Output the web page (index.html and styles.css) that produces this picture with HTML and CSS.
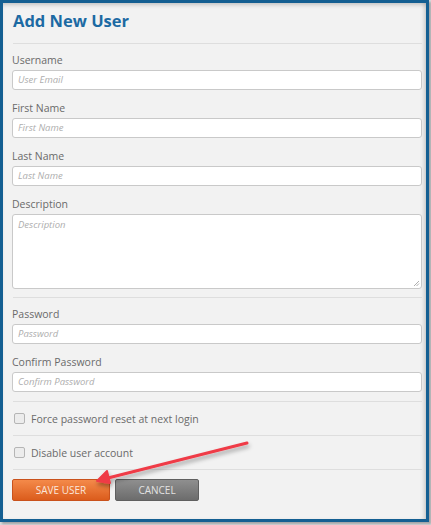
FILE: index.html
```html
<!DOCTYPE html>
<html>
<head>
<meta charset="utf-8">
<link rel="stylesheet" href="styles.css">
</head>
<body>
<div class="frame">
  <div class="panel">
    <h1 class="title">Add New User</h1>
    <div class="rule rule-title"></div>

    <div class="field">
      <label class="label">Username</label>
      <div class="input">User Email</div>
    </div>
    <div class="field">
      <label class="label">First Name</label>
      <div class="input">First Name</div>
    </div>
    <div class="field">
      <label class="label">Last Name</label>
      <div class="input">Last Name</div>
    </div>
    <div class="field field-last">
      <label class="label">Description</label>
      <div class="input textarea">Description
        <svg class="grip" width="7" height="7" viewBox="0 0 7 7"><path d="M6 1 L1 6 M6 3.5 L3.5 6" stroke="#999" stroke-width="0.8"/></svg>
      </div>
    </div>
    <div class="rule rule-section"></div>

    <div class="field">
      <label class="label">Password</label>
      <div class="input">Password</div>
    </div>
    <div class="field field-last">
      <label class="label">Confirm Password</label>
      <div class="input">Confirm Password</div>
    </div>
    <div class="rule rule-before-checks"></div>

    <div class="check-row"><span class="box"></span><span>Force password reset at next login</span></div>
    <div class="rule"></div>
    <div class="check-row"><span class="box"></span><span>Disable user account</span></div>
    <div class="rule"></div>

    <div class="actions">
      <button class="btn btn-save">SAVE USER</button>
      <button class="btn btn-cancel">CANCEL</button>
    </div>
  </div>
  <svg class="arrow" width="431" height="525" viewBox="0 0 431 525">
    <defs>
      <filter id="sh" x="-20%" y="-50%" width="140%" height="200%">
        <feDropShadow dx="1" dy="3" stdDeviation="2" flood-color="#000" flood-opacity="0.35"/>
      </filter>
    </defs>
    <g filter="url(#sh)" stroke="#ef3b46" stroke-linecap="round" stroke-linejoin="round" fill="#ef3b46">
      <line x1="247" y1="443" x2="104" y2="479" stroke-width="3"/>
      <path d="M97 481 L107 471 L110 483 Z" stroke-width="2"/>
    </g>
  </svg>
</div>
</body>
</html>
```

FILE: styles.css
```css
html, body {
  margin: 0;
  padding: 0;
}
body {
  width: 431px;
  height: 525px;
  background: #d8dadc;
  font-family: "Open Sans", "Noto Sans", sans-serif;
  overflow: hidden;
}
.frame {
  position: relative;
  width: 429px;
  height: 522px;
  box-sizing: border-box;
  border: 3px solid #145f92;
  background: #f2f2f2;
  box-shadow: 2px 2px 2px rgba(0,0,0,0.25);
}
.panel {
  height: 100%;
  box-sizing: border-box;
  padding: 6px 4px 0 9px;
  box-shadow: inset 0 4px 4px -2px rgba(0,0,0,0.18), inset -4px 0 4px -2px rgba(0,0,0,0.15);
}
.title {
  margin: 0 0 0 1px;
  font-size: 16.5px;
  line-height: 24px;
  font-weight: 700;
  color: #1c6aa3;
}
.rule {
  height: 1px;
  background: #dedede;
  margin: 0 0 0 1px;
}
.rule-title {
  margin-top: 10px;
  margin-bottom: 9px;
}
.rule-section {
  margin-top: 8px;
  margin-bottom: 9px;
}
.rule-before-checks {
  margin-top: 9px;
}
.field {
  margin-bottom: 11px;
}
.field-last {
  margin-bottom: 0;
}
.label {
  display: block;
  font-size: 10.5px;
  line-height: 14px;
  color: #6a6a6a;
  margin-bottom: 3px;
}
.input {
  position: relative;
  height: 20px;
  box-sizing: border-box;
  border: 1px solid #c9c9c9;
  border-radius: 3px;
  background: #fff;
  padding: 0 5px;
  font-size: 9.5px;
  line-height: 18px;
  font-style: italic;
  color: #aeaeae;
}
.textarea {
  height: 75px;
  padding-top: 1px;
}
.grip {
  position: absolute;
  right: 1px;
  bottom: 1px;
}
.check-row {
  display: flex;
  align-items: center;
  gap: 6px;
  height: 33px;
  padding-left: 2px;
  font-size: 10.5px;
  color: #6a6a6a;
}
.box {
  width: 9px;
  height: 9px;
  border: 1px solid #b5b5b5;
  border-radius: 2px;
  background: #ececec;
}
.actions {
  display: flex;
  gap: 5px;
  margin-top: 9px;
}
.btn {
  height: 22px;
  box-sizing: border-box;
  border-radius: 2px;
  font-family: "Open Sans", "Noto Sans", sans-serif;
  font-size: 10px;
  padding: 0;
  cursor: pointer;
}
.btn-save {
  width: 98px;
  border: 1px solid #c9521c;
  background: linear-gradient(#f48a4a, #db5c1c);
  color: #fbe6da;
}
.btn-cancel {
  width: 84px;
  border: 1px solid #5f5f5f;
  background: linear-gradient(#8f8f8f, #6c6c6c);
  color: #e2e2e2;
}
.arrow {
  position: absolute;
  left: -3px;
  top: -3px;
  pointer-events: none;
}
```
